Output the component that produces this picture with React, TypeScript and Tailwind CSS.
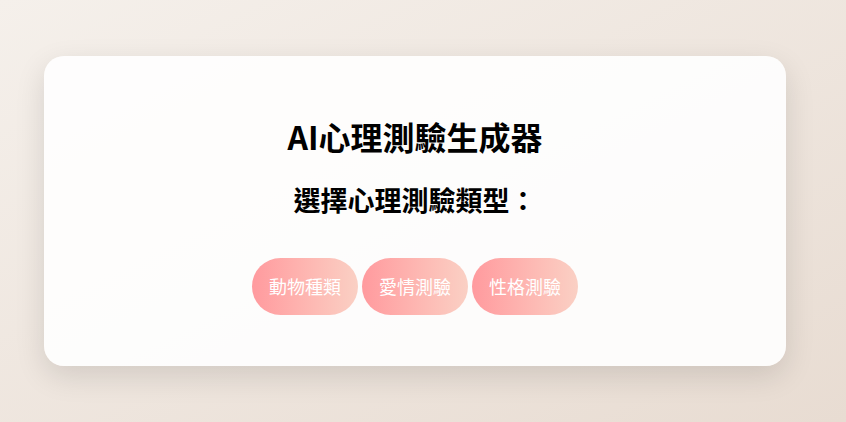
import React from 'react';

const types = ['動物種類', '愛情測驗', '性格測驗'];

const App: React.FC = () => {
  return (
    <div
      className="min-h-screen w-full bg-gradient-to-br from-[#f5f0eb] to-[#e8dcd2] pt-[56px] pb-[56px]"
      style={{ fontFamily: '"Noto Sans CJK TC", "Noto Sans", sans-serif' }}
    >
      <div className="ml-[44px] w-[742px] rounded-[20px] bg-white/90 shadow-[0_10px_30px_rgba(0,0,0,0.12)] pt-[57px] pb-[51px] flex flex-col items-center">
        <h1 className="text-[32px] leading-[46px] font-bold text-black">AI心理測驗生成器</h1>
        <h2 className="mt-[22px] text-[27px] leading-[38px] font-bold text-black">選擇心理測驗類型：</h2>
        <div className="mt-[39px] flex gap-[4px]">
          {types.map((t) => (
            <button
              key={t}
              className="rounded-full bg-gradient-to-r from-[#ff9a9e] to-[#fad0c4] px-[17px] py-[15px] text-[18px] leading-[27px] text-white"
            >
              {t}
            </button>
          ))}
        </div>
      </div>
    </div>
  );
};

export default App;
